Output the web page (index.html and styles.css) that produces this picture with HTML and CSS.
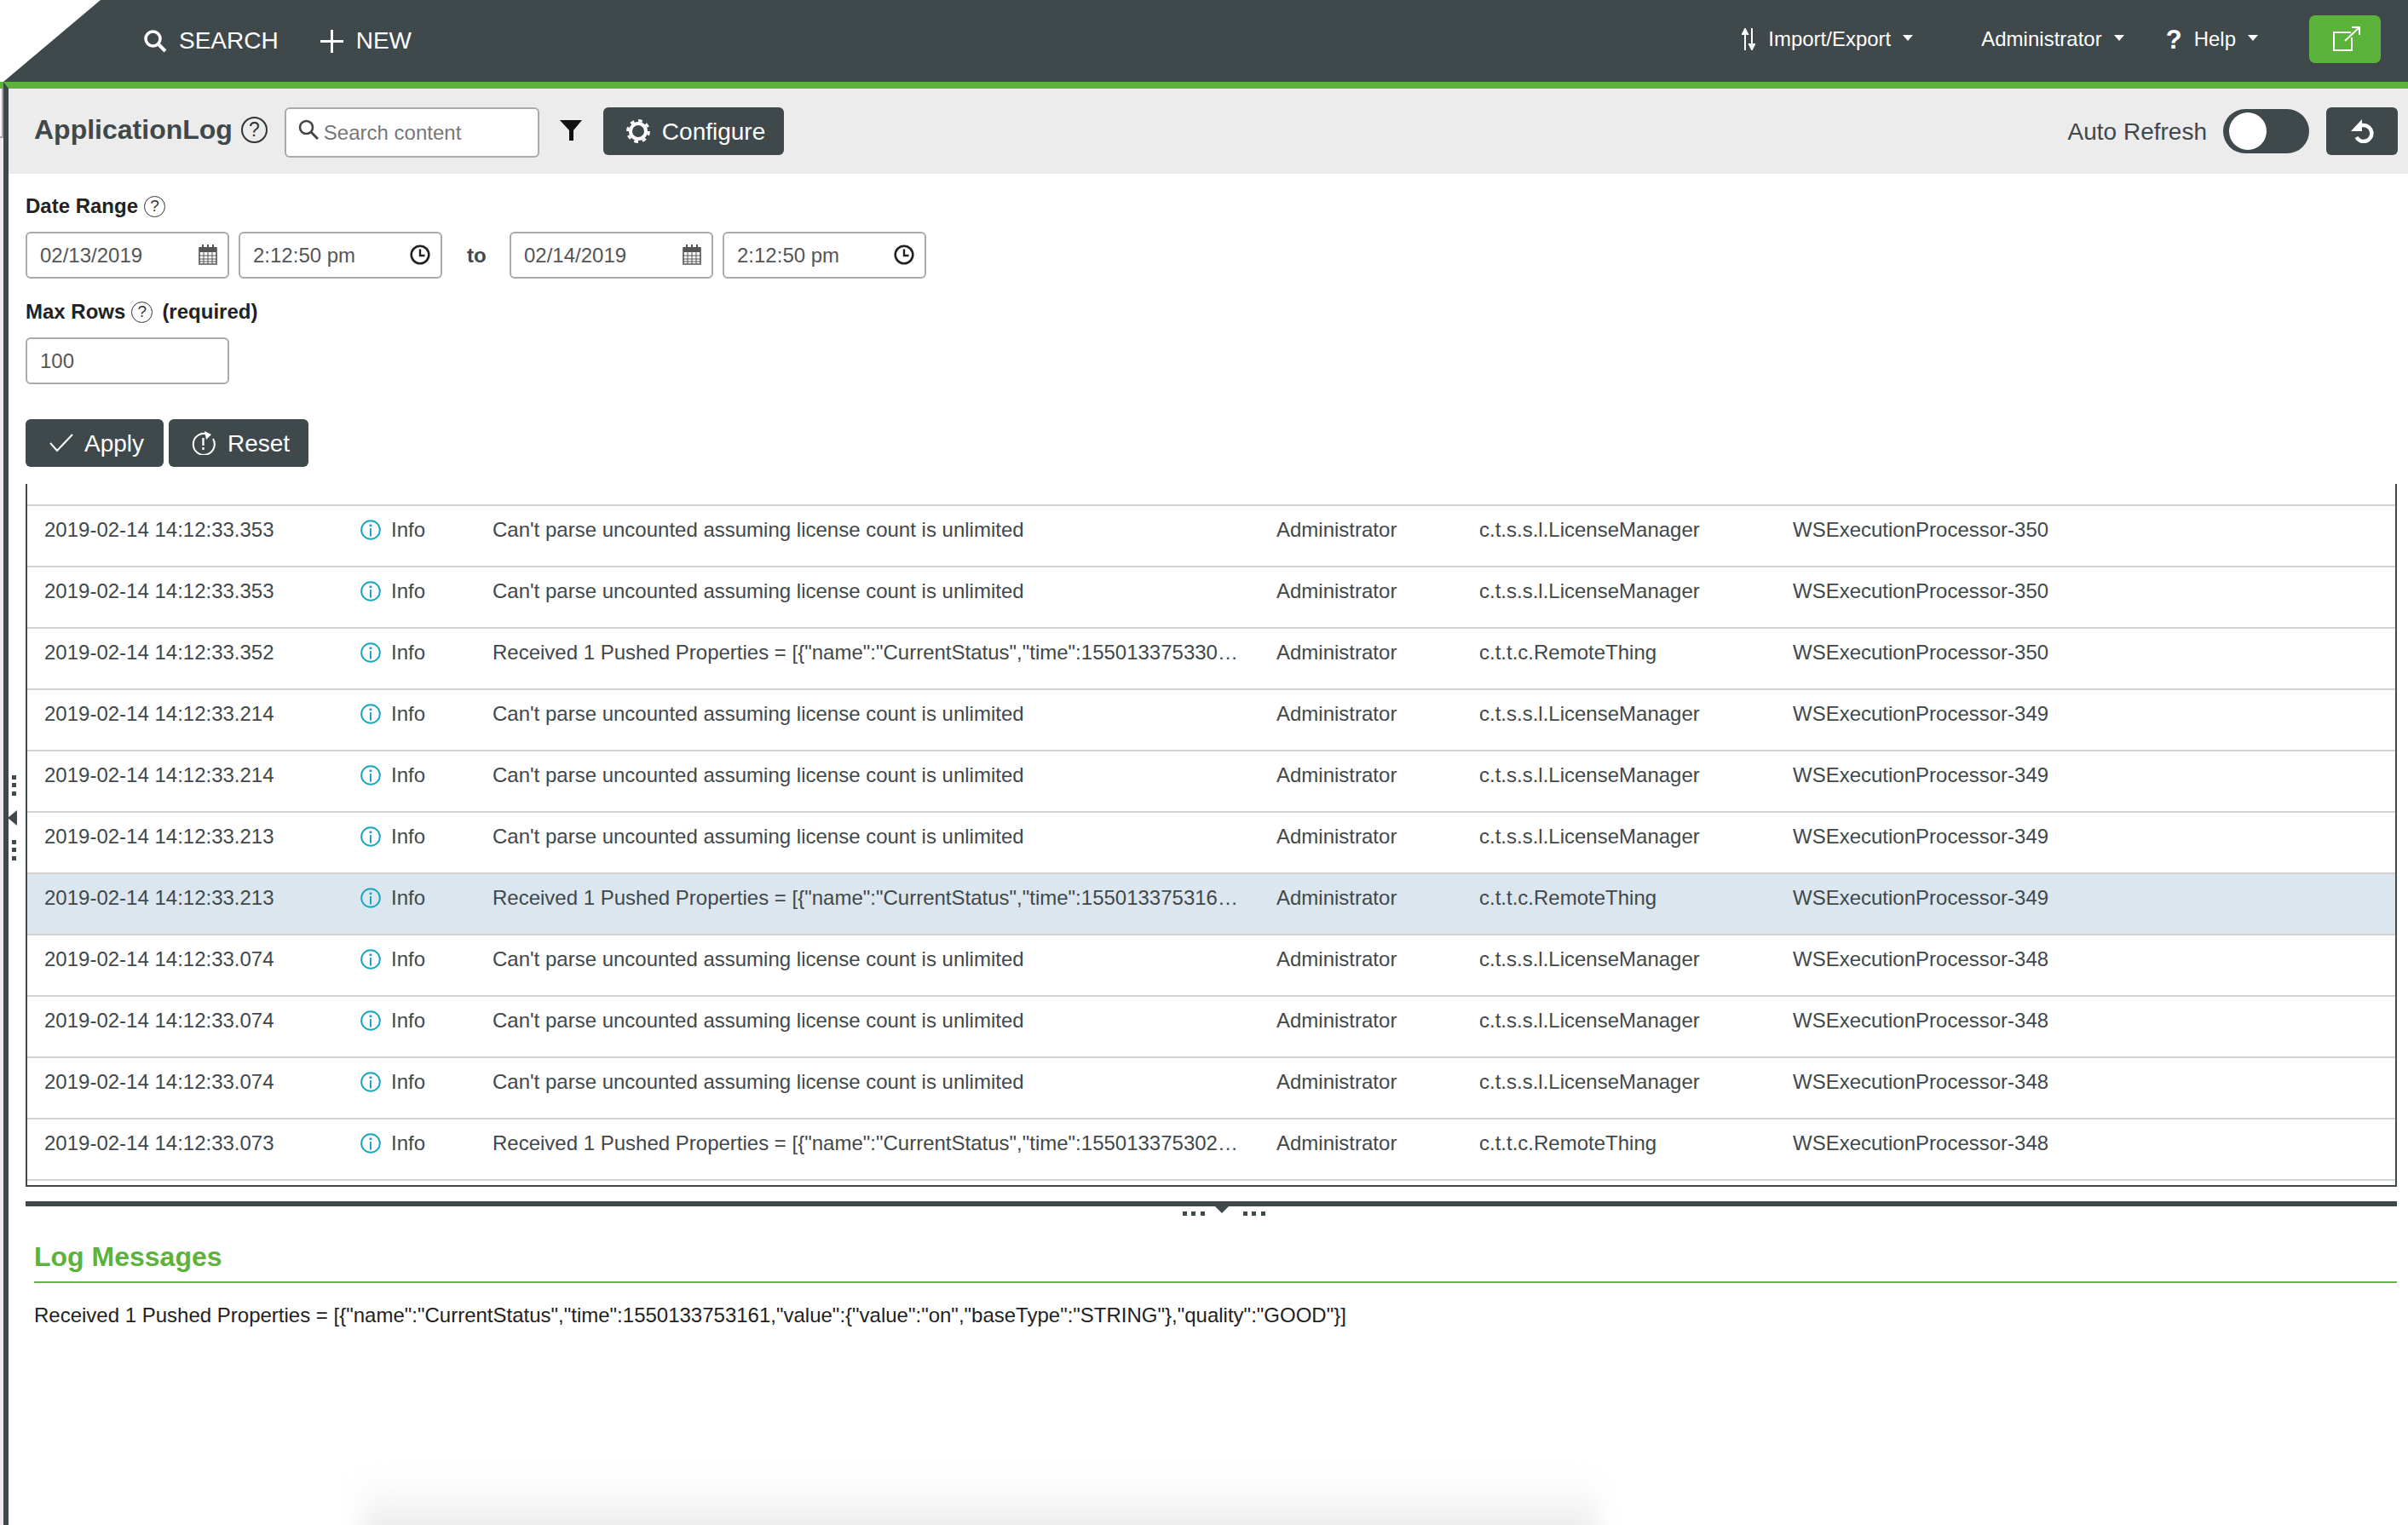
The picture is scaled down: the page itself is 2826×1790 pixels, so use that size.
FILE: index.html
```html
<!DOCTYPE html>
<html lang="en">
<head>
    <meta charset="UTF-8">
    <title>ApplicationLog</title>
    <link rel="stylesheet" href="styles.css">
</head>
<body>
<svg class="defs" width="0" height="0">
    <symbol id="info" viewBox="0 0 24 24">
        <circle cx="12" cy="12" r="10.8" fill="none" stroke="#1ca5c2" stroke-width="2"/>
        <circle cx="12" cy="6.8" r="1.5" fill="#1ca5c2"/>
        <rect x="11" y="10" width="2" height="9.5" fill="#1ca5c2"/>
    </symbol>
    <symbol id="calendar" viewBox="0 0 22 24">
        <path d="M1 4h20v19H1z" fill="#fff" stroke="#555" stroke-width="1.6"/>
        <path d="M1 3h20v6H1z" fill="#555"/>
        <path d="M5 0v5M11 0v5M17 0v5" stroke="#555" stroke-width="2"/>
        <path d="M1 13h20M1 17h20M1 20h20M6 9v14M11 9v14M16 9v14" stroke="#555" stroke-width="1"/>
    </symbol>
    <symbol id="clock" viewBox="0 0 24 24">
        <circle cx="12" cy="12" r="10.3" fill="none" stroke="#222" stroke-width="2.6"/>
        <path d="M12 5.5V13h5.5" fill="none" stroke="#222" stroke-width="2.4"/>
    </symbol>
</svg>

<header class="topbar">
    <a class="nav-main">
        <svg class="ico-search" viewBox="0 0 28 28"><circle cx="11.500" cy="11.500" r="8.500" fill="none" stroke="#fff" stroke-width="3.600"/><path d="M17.500 17.500L26 26" stroke="#fff" stroke-width="4"/></svg>
        <span>SEARCH</span>
    </a>
    <a class="nav-main nav-new">
        <svg class="ico-plus" viewBox="0 0 27 27"><path d="M13.500 0v27M0 13.500h27" stroke="#fff" stroke-width="3"/></svg>
        <span>NEW</span>
    </a>
    <div class="nav-right">
        <a class="nav-item">
            <svg class="ico-sort" viewBox="0 0 16 26"><path d="M4 26V6M1 7l3-6 3 6zM12 0v20M9 19l3 6 3-6z" fill="#fff" stroke="#fff" stroke-width="2"/></svg>
            <span>Import/Export</span><em class="caret"></em>
        </a>
        <a class="nav-item nav-admin"><span>Administrator</span><em class="caret"></em></a>
        <a class="nav-item nav-help"><b class="help-mark">?</b><span>Help</span><em class="caret"></em></a>
        <button class="btn-open">
            <svg viewBox="0 0 34 30" width="34" height="30"><path d="M22 7H2v21h21V13" fill="none" stroke="#fff" stroke-width="2"/><path d="M15 17L32 1M23 1h9v9" fill="none" stroke="#fff" stroke-width="2"/></svg>
        </button>
    </div>
</header>

<div class="layout">
    <div class="edge-strip"><i></i></div>
    <div class="content">
        <div class="toolbar">
            <h1 class="app-title">ApplicationLog</h1>
            <span class="help help-lg">?</span>
            <div class="search-box">
                <svg viewBox="0 0 24 24" width="24" height="24"><circle cx="9.500" cy="9.500" r="7.500" fill="none" stroke="#444" stroke-width="2.600"/><path d="M15 15l8 8" stroke="#444" stroke-width="3"/></svg>
                <input type="text" placeholder="Search content">
            </div>
            <svg class="ico-filter" viewBox="0 0 26 24"><path d="M0 0h26L16 12v12h-5V12z" fill="#111"/></svg>
            <button class="btn btn-configure">
                <svg viewBox="0 0 28 28" width="28" height="28"><circle cx="14" cy="14" r="9" fill="none" stroke="#fff" stroke-width="4"/><circle cx="14" cy="14" r="12.400" fill="none" stroke="#fff" stroke-width="3" stroke-dasharray="4.700 5"/></svg>
                Configure
            </button>
            <div class="toolbar-right">
                <span class="auto-label">Auto Refresh</span>
                <div class="toggle"><i></i></div>
                <button class="btn btn-refresh">
                    <svg viewBox="0 0 30 28" width="30" height="28"><path d="M12 7h5a9.500 9.500 0 1 1-8.500 14" fill="none" stroke="#fff" stroke-width="4.500"/><path d="M15 0v14H2z" fill="#fff"/></svg>
                </button>
            </div>
        </div>

        <div class="body-pad">
            <div class="field-label">Date Range <span class="help">?</span></div>
            <div class="field-row">
                <div class="input-box"><input type="text" value="02/13/2019"><svg class="ico-cal"><use href="#calendar"/></svg></div>
                <div class="input-box"><input type="text" value="2:12:50 pm"><svg class="ico-clock"><use href="#clock"/></svg></div>
                <b class="to">to</b>
                <div class="input-box"><input type="text" value="02/14/2019"><svg class="ico-cal"><use href="#calendar"/></svg></div>
                <div class="input-box"><input type="text" value="2:12:50 pm"><svg class="ico-clock"><use href="#clock"/></svg></div>
            </div>
            <div class="field-label label-rows">Max Rows <span class="help">?</span> <span class="req">(required)</span></div>
            <div class="field-row row-rows">
                <div class="input-box"><input type="text" value="100"></div>
            </div>
            <div class="actions">
                <button class="btn btn-apply">
                    <svg viewBox="0 0 28 22" width="28" height="22"><path d="M1 11l8 9L27 1" fill="none" stroke="#fff" stroke-width="2"/></svg>
                    Apply
                </button>
                <button class="btn btn-reset">
                    <svg viewBox="0 0 28 28" width="28" height="28"><path d="M18 3.500A12.500 12.500 0 1 0 25 9" fill="none" stroke="#fff" stroke-width="2"/><path d="M15 0l8 4-6 6z" fill="#fff"/><path d="M13.500 8v9M13.500 19v3" stroke="#fff" stroke-width="2.400"/></svg>
                    Reset
                </button>
            </div>

            <div class="log-panel">
                <table class="log-table">
                    <colgroup><col class="c-time"><col class="c-level"><col class="c-msg"><col class="c-user"><col class="c-src"><col class="c-thread"><col></colgroup>
                    <tr><td>2019-02-14 14:12:33.353</td><td><svg class="ico-info"><use href="#info"/></svg>Info</td><td>Can't parse uncounted assuming license count is unlimited</td><td>Administrator</td><td>c.t.s.s.l.LicenseManager</td><td>WSExecutionProcessor-350</td><td></td></tr>
                    <tr><td>2019-02-14 14:12:33.353</td><td><svg class="ico-info"><use href="#info"/></svg>Info</td><td>Can't parse uncounted assuming license count is unlimited</td><td>Administrator</td><td>c.t.s.s.l.LicenseManager</td><td>WSExecutionProcessor-350</td><td></td></tr>
                    <tr><td>2019-02-14 14:12:33.352</td><td><svg class="ico-info"><use href="#info"/></svg>Info</td><td>Received 1 Pushed Properties = [{"name":"CurrentStatus","time":155013375330…</td><td>Administrator</td><td>c.t.t.c.RemoteThing</td><td>WSExecutionProcessor-350</td><td></td></tr>
                    <tr><td>2019-02-14 14:12:33.214</td><td><svg class="ico-info"><use href="#info"/></svg>Info</td><td>Can't parse uncounted assuming license count is unlimited</td><td>Administrator</td><td>c.t.s.s.l.LicenseManager</td><td>WSExecutionProcessor-349</td><td></td></tr>
                    <tr><td>2019-02-14 14:12:33.214</td><td><svg class="ico-info"><use href="#info"/></svg>Info</td><td>Can't parse uncounted assuming license count is unlimited</td><td>Administrator</td><td>c.t.s.s.l.LicenseManager</td><td>WSExecutionProcessor-349</td><td></td></tr>
                    <tr><td>2019-02-14 14:12:33.213</td><td><svg class="ico-info"><use href="#info"/></svg>Info</td><td>Can't parse uncounted assuming license count is unlimited</td><td>Administrator</td><td>c.t.s.s.l.LicenseManager</td><td>WSExecutionProcessor-349</td><td></td></tr>
                    <tr class="selected"><td>2019-02-14 14:12:33.213</td><td><svg class="ico-info"><use href="#info"/></svg>Info</td><td>Received 1 Pushed Properties = [{"name":"CurrentStatus","time":155013375316…</td><td>Administrator</td><td>c.t.t.c.RemoteThing</td><td>WSExecutionProcessor-349</td><td></td></tr>
                    <tr><td>2019-02-14 14:12:33.074</td><td><svg class="ico-info"><use href="#info"/></svg>Info</td><td>Can't parse uncounted assuming license count is unlimited</td><td>Administrator</td><td>c.t.s.s.l.LicenseManager</td><td>WSExecutionProcessor-348</td><td></td></tr>
                    <tr><td>2019-02-14 14:12:33.074</td><td><svg class="ico-info"><use href="#info"/></svg>Info</td><td>Can't parse uncounted assuming license count is unlimited</td><td>Administrator</td><td>c.t.s.s.l.LicenseManager</td><td>WSExecutionProcessor-348</td><td></td></tr>
                    <tr><td>2019-02-14 14:12:33.074</td><td><svg class="ico-info"><use href="#info"/></svg>Info</td><td>Can't parse uncounted assuming license count is unlimited</td><td>Administrator</td><td>c.t.s.s.l.LicenseManager</td><td>WSExecutionProcessor-348</td><td></td></tr>
                    <tr><td>2019-02-14 14:12:33.073</td><td><svg class="ico-info"><use href="#info"/></svg>Info</td><td>Received 1 Pushed Properties = [{"name":"CurrentStatus","time":155013375302…</td><td>Administrator</td><td>c.t.t.c.RemoteThing</td><td>WSExecutionProcessor-348</td><td></td></tr>
                </table>
            </div>

            <div class="sash">
                <div class="sash-grip"><i class="dots"></i><em class="sash-arrow"></em><i class="dots"></i></div>
            </div>

            <h2 class="log-title">Log Messages</h2>
            <p class="log-text">Received 1 Pushed Properties = [{"name":"CurrentStatus","time":1550133753161,"value":{"value":"on","baseType":"STRING"},"quality":"GOOD"}]</p>
        </div>

        <div class="side-grip"><i class="vdots"></i><em class="side-arrow"></em><i class="vdots"></i></div>
        <div class="modal-shadow"></div>
    </div>
</div>
</body>
</html>
```

FILE: styles.css
```css
*{
    margin: 0;
    padding: 0;
    box-sizing: border-box;
    font-family: "Liberation Sans", Arial, sans-serif;
}

html,body{
    width: 2826px;
    height: 1790px;
    overflow: hidden;
    background: #fff;
}

button{
    border: none;
}

.defs{
    position: absolute;
}

/* top bar */
.topbar{
    display: flex;
    align-items: center;
    height: 96px;
    padding-left: 168px;
    background: #3f484b;
    clip-path: polygon(118px 0, 100% 0, 100% 100%, 4px 100%);
    color: #fff;
}
.nav-main{
    display: flex;
    align-items: center;
    font-size: 28px;
}
.ico-search{
    width: 28px;
    height: 28px;
    margin-right: 14px;
}
.ico-plus{
    width: 27px;
    height: 27px;
    margin-right: 15px;
}
.nav-new{
    margin-left: 49px;
}
.nav-right{
    display: flex;
    align-items: center;
    margin-left: auto;
    padding: 0 32px 4px 0;
}
.nav-item{
    display: flex;
    align-items: center;
    font-size: 24px;
}
.ico-sort{
    width: 16px;
    height: 26px;
    margin-right: 15px;
}
.caret{
    width: 0;
    height: 0;
    margin: -4px 0 0 14px;
    border-left: 6.500px solid transparent;
    border-right: 6.500px solid transparent;
    border-top: 7px solid #fff;
}
.nav-admin{
    margin-left: 80px;
}
.nav-help{
    margin-left: 49px;
}
.help-mark{
    width: 33px;
    font-size: 31px;
    font-weight: bold;
    line-height: 1;
}
.btn-open{
    display: flex;
    align-items: center;
    justify-content: center;
    width: 84px;
    height: 56px;
    margin-left: 60px;
    padding-left: 4px;
    border-radius: 7px;
    background: #5cb33b;
}

/* page body */
.layout{
    display: flex;
    height: 1694px;
}
.edge-strip{
    flex: none;
    width: 4px;
    border-top: 8px solid #5cb33b;
    background: #ececec;
}
.edge-strip i{
    display: block;
    height: 58px;
    border-right: 2px solid #aaa;
    border-bottom: 2px solid #aaa;
    background: #f6f6f6;
}
.content{
    flex: 1;
    border-left: 6px solid #3f484b;
    border-top: 8px solid #5cb33b;
}
.toolbar{
    display: flex;
    align-items: center;
    height: 100px;
    padding: 0 12px 0 30px;
    background: #ececec;
}
.app-title{
    margin-top: -3px;
    font-size: 32px;
    font-weight: bold;
    color: #3f484b;
}
.help{
    display: inline-flex;
    align-items: center;
    justify-content: center;
    width: 25px;
    height: 25px;
    border: 1.500px solid #333;
    border-radius: 50%;
    font-size: 19px;
    font-weight: normal;
    color: #333;
    vertical-align: 0;
}
.help-lg{
    width: 31px;
    height: 31px;
    margin: -3px 0 0 10px;
    border-width: 2px;
    font-size: 23px;
}
.search-box{
    display: flex;
    align-items: center;
    width: 299px;
    height: 59px;
    margin: 3px 0 0 20px;
    padding: 0 0 6px 14px;
    border: 2px solid #aaa;
    border-radius: 6px;
    background: #fff;
}
.search-box svg{
    flex: none;
    margin-top: -2px;
}
.search-box input{
    width: 240px;
    margin: 6px 0 0 6px;
    border: none;
    outline: none;
    font-size: 24px;
    color: #555;
}
.search-box input::placeholder{
    color: #777;
    opacity: 1;
}
.ico-filter{
    width: 26px;
    height: 24px;
    margin: -2px 25px 0 24px;
}
.btn{
    display: inline-flex;
    align-items: center;
    height: 56px;
    padding-top: 2px;
    border-radius: 6px;
    background: #3f484b;
    color: #fff;
    font-size: 28px;
}
.btn svg{
    margin-top: -2px;
}
.btn-configure{
    width: 212px;
    gap: 14px;
    padding-left: 27px;
}
.toolbar-right{
    display: flex;
    align-items: center;
    margin-left: auto;
}
.auto-label{
    padding-top: 1px;
    font-size: 28px;
    color: #3f484b;
}
.toggle{
    display: flex;
    align-items: center;
    width: 101px;
    height: 52px;
    margin: 0 20px 0 19px;
    padding-left: 7px;
    border-radius: 26px;
    background: #3f484b;
}
.toggle i{
    width: 44px;
    height: 44px;
    border-radius: 50%;
    background: #fff;
}
.btn-refresh{
    justify-content: center;
    width: 84px;
}

.body-pad{
    padding: 24px 13px 0 20px;
}
.field-label{
    display: flex;
    align-items: center;
    gap: 7px;
    font-size: 24px;
    line-height: 28px;
    font-weight: bold;
    color: #222;
}
.req{
    margin-left: 4px;
}
.field-row{
    display: flex;
    align-items: center;
    gap: 11px;
    margin-top: 16px;
}
.label-rows{
    margin-top: 25px;
}
.row-rows{
    margin-top: 16px;
}
.input-box{
    display: flex;
    align-items: center;
    width: 239px;
    height: 55px;
    padding: 0 12px 0 15px;
    border: 2px solid #aaa;
    border-radius: 6px;
}
.input-box input{
    flex: 1;
    min-width: 0;
    border: none;
    outline: none;
    font-size: 24px;
    color: #555;
}
.ico-cal{
    width: 22px;
    height: 24px;
    margin-top: -1px;
}
.ico-clock{
    width: 24px;
    height: 24px;
    margin-top: -2px;
}
.to{
    width: 23px;
    margin: 0 16px 0 18px;
    font-size: 24px;
    color: #3f484b;
}
.actions{
    display: flex;
    gap: 6px;
    margin-top: 41px;
}
.btn-apply{
    width: 162px;
    gap: 13px;
    padding-left: 28px;
}
.btn-reset{
    width: 164px;
    gap: 14px;
    padding-left: 27px;
}

/* log table */
.log-panel{
    margin-top: 20px;
    padding: 24px 0 5px;
    border: 2px solid #3f484b;
    border-top: none;
}
.log-table{
    width: 100%;
    table-layout: fixed;
    border-collapse: separate;
    border-spacing: 0;
    border-bottom: 2px solid #d2d2d2;
    font-size: 24px;
    color: #3f484b;
}
.c-time{ width: 371px; }
.c-level{ width: 155px; }
.c-msg{ width: 920px; }
.c-user{ width: 238px; }
.c-src{ width: 368px; }
.c-thread{ width: 340px; }
.log-table td{
    height: 72px;
    padding: 14px 0 0 20px;
    border-top: 2px solid #d2d2d2;
    line-height: 28px;
    vertical-align: top;
    white-space: nowrap;
}
.selected td{
    background: #dce6ee;
}
.ico-info{
    width: 24px;
    height: 24px;
    margin-right: 12px;
    vertical-align: -4px;
}

/* splitter */
.sash{
    position: relative;
    height: 6px;
    margin-top: 17px;
    background: #3f484b;
}
.sash-grip{
    position: absolute;
    top: 6px;
    left: 1358px;
    display: flex;
    align-items: flex-start;
}
.dots{
    width: 26px;
    height: 5px;
    margin-top: 6px;
    background: repeating-linear-gradient(90deg,#3f484b 0,#3f484b 5px,transparent 5px,transparent 10.500px);
}
.sash-arrow{
    width: 0;
    height: 0;
    margin: 0 17px 0 12px;
    border-left: 8px solid transparent;
    border-right: 8px solid transparent;
    border-top: 8px solid #3f484b;
}

.log-title{
    margin: 41px 0 0 10px;
    padding-bottom: 11px;
    border-bottom: 2px solid #6ab04c;
    font-size: 32px;
    line-height: 36px;
    font-weight: bold;
    color: #5cb33b;
}
.log-text{
    margin: 24px 0 0 10px;
    font-size: 24px;
    line-height: 28px;
    color: #222;
}

/* bits lying over the page */
.side-grip{
    position: absolute;
    left: 9px;
    top: 910px;
    display: flex;
    flex-direction: column;
    align-items: flex-end;
    gap: 17px;
    width: 11px;
}
.vdots{
    width: 5px;
    height: 24px;
    margin-right: 1px;
    background: repeating-linear-gradient(180deg,#3f484b 0,#3f484b 5px,transparent 5px,transparent 9.500px);
}
.side-arrow{
    width: 0;
    height: 0;
    border-top: 9px solid transparent;
    border-bottom: 9px solid transparent;
    border-right: 11px solid #3f484b;
}
.modal-shadow{
    position: absolute;
    left: 425px;
    top: 1725px;
    width: 1450px;
    height: 100px;
    background: linear-gradient(#fff,#fbfbfb 25%,#ececec 70%,#e4e4e4);
    filter: blur(14px);
}
```
